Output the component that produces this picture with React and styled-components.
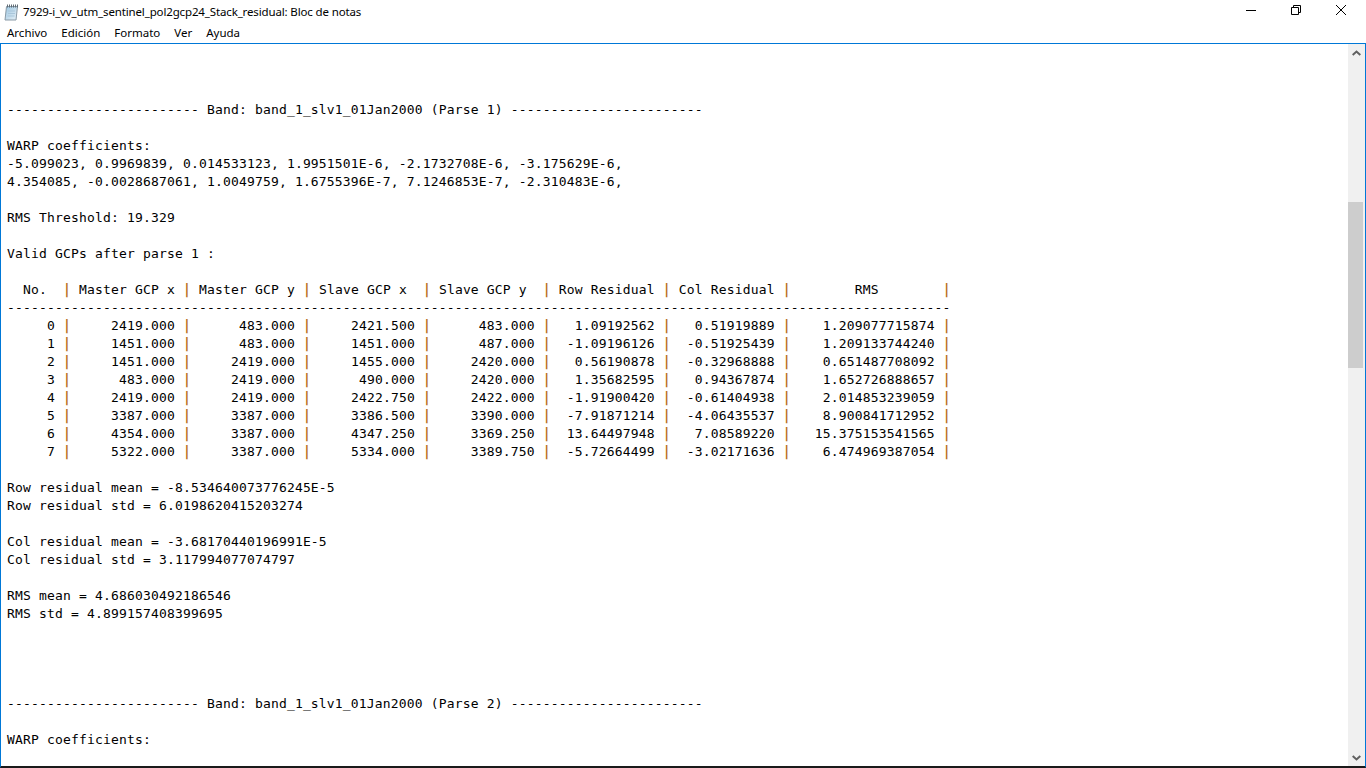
import React from 'react';
import styled, { createGlobalStyle } from 'styled-components';

const GlobalStyle = createGlobalStyle`
	html, body {
		margin: 0;
		padding: 0;
		height: 100%;
		overflow: hidden;
		background: #fff;
	}
`;

const Window = styled.div`
	display: flex;
	flex-direction: column;
	width: 1366px;
	height: 768px;
	background: #fff;
	font-family: 'Noto Sans', 'Open Sans', sans-serif;
	font-size: 11.5px;
	color: #000;
`;

const TitleBar = styled.div`
	display: flex;
	align-items: center;
	height: 22px;
	padding-right: 3px;
	flex-shrink: 0;
`;

const AppIcon = styled.svg`
	width: 16px;
	height: 17px;
	margin: 2px 4px 0 3px;
	flex-shrink: 0;
`;

const Title = styled.div`
	flex: 1;
	letter-spacing: -0.14px;
	white-space: nowrap;
`;

const Caption = styled.div`
	display: flex;
	align-items: center;
	justify-content: center;
	align-self: flex-start;
	width: 45px;
	height: 20px;
`;

const MenuBar = styled.div`
	display: flex;
	align-items: center;
	height: 21px;
	padding-left: 7px;
	gap: 14px;
	flex-shrink: 0;
`;

const Frame = styled.div`
	display: flex;
	flex: 1;
	min-height: 0;
	border-top: 1px solid #0078d7;
	border-left: 1px solid #0078d7;
	border-right: 1px solid #0078d7;
	border-bottom: 2px solid #1a1a1a;
`;

const Editor = styled.pre`
	flex: 1;
	margin: 0;
	padding: 57px 0 0 6px;
	overflow: hidden;
	font-family: 'DejaVu Sans Mono', monospace;
	font-size: 13px;
	letter-spacing: 0.17px;
	line-height: 18px;
	color: #000;
`;

/* the pipe in the reference font is taller than in DejaVu */
const Pipe = styled.span`
	display: inline-block;
	color: #b96f20;
	font-weight: bold;
	transform: scaleY(1.08);
`;

const Scrollbar = styled.div`
	display: flex;
	flex-direction: column;
	width: 17px;
	background: #f0f0f0;
	flex-shrink: 0;
`;

const ScrollButton = styled.div`
	display: flex;
	align-items: center;
	justify-content: center;
	height: 17px;
`;

const TrackSpace = styled.div`
	height: ${(props) => props.size}px;
	flex: ${(props) => (props.size ? 'none' : 1)};
`;

const Thumb = styled.div`
	width: 15px;
	height: 166px;
	background: #cdcdcd;
`;

const rule = '-'.repeat(24);
const band = (n) => `${rule} Band: band_1_slv1_01Jan2000 (Parse ${n}) ${rule}`;

const head = ['  No.  ', ' Master GCP x ', ' Master GCP y ', ' Slave GCP x  ', ' Slave GCP y  ', ' Row Residual ', ' Col Residual ', '        RMS        '];
const widths = [7, 14, 14, 14, 14, 14, 14, 19];

const rows = [
	['0', '2419.000', '483.000', '2421.500', '483.000', '1.09192562', '0.51919889', '1.209077715874'],
	['1', '1451.000', '483.000', '1451.000', '487.000', '-1.09196126', '-0.51925439', '1.209133744240'],
	['2', '1451.000', '2419.000', '1455.000', '2420.000', '0.56190878', '-0.32968888', '0.651487708092'],
	['3', '483.000', '2419.000', '490.000', '2420.000', '1.35682595', '0.94367874', '1.652726888657'],
	['4', '2419.000', '2419.000', '2422.750', '2422.000', '-1.91900420', '-0.61404938', '2.014853239059'],
	['5', '3387.000', '3387.000', '3386.500', '3390.000', '-7.91871214', '-4.06435537', '8.900841712952'],
	['6', '4354.000', '3387.000', '4347.250', '3369.250', '13.64497948', '7.08589220', '15.375153541565'],
	['7', '5322.000', '3387.000', '5334.000', '3389.750', '-5.72664499', '-3.02171636', '6.474969387054'],
];

function TableRow({ cells }) {
	return (
		<>
			{cells.map((cell, i) => (
				<React.Fragment key={i}>
					{cell}
					<Pipe>|</Pipe>
				</React.Fragment>
			))}
			{'\n'}
		</>
	);
}

function App() {
	return (
		<>
			<GlobalStyle />
			<Window>
				<TitleBar>
					<AppIcon viewBox="0 0 16 17">
						<defs>
							<linearGradient id="pad" x1="0" y1="0" x2="1" y2="1">
								<stop offset="0" stopColor="#9cc6e2" />
								<stop offset="1" stopColor="#e6f0f6" />
							</linearGradient>
						</defs>
						<path d="M3.5 2.500h11l-1.500 13.500h-11z" fill="url(#pad)" stroke="#8a9aa6" />
						<path d="M4.500 .5v3M6.500 .5v3M8.500 .5v3M10.500 .5v3M12.500 .5v3M14.500 .5v3" stroke="#5f6b74" />
						<path d="M5 7h7M5 9.500h7M4.500 12h7" stroke="#a9c6da" />
					</AppIcon>
					<Title>7929-i_vv_utm_sentinel_pol2gcp24_Stack_residual: Bloc de notas</Title>
					<Caption>
						<svg width="10" height="10" viewBox="0 0 10 10">
							<path d="M0 5.500h10" stroke="#000" />
						</svg>
					</Caption>
					<Caption>
						<svg width="10" height="10" viewBox="0 0 10 10" fill="none">
							<path d="M.5 2.500h7v7h-7zM2.500 2.500v-2h7v7h-2" stroke="#000" />
						</svg>
					</Caption>
					<Caption>
						<svg width="10" height="10" viewBox="0 0 10 10">
							<path d="M0 0l10 10M10 0L0 10" stroke="#000" />
						</svg>
					</Caption>
				</TitleBar>
				<MenuBar>
					<span>Archivo</span>
					<span>Edición</span>
					<span>Formato</span>
					<span>Ver</span>
					<span>Ayuda</span>
				</MenuBar>
				<Frame>
					<Editor>
						{band(1)}
						{'\n\nWARP coefficients:\n'}
						{'-5.099023, 0.9969839, 0.014533123, 1.9951501E-6, -2.1732708E-6, -3.175629E-6,\n'}
						{'4.354085, -0.0028687061, 1.0049759, 1.6755396E-7, 7.1246853E-7, -2.310483E-6,\n'}
						{'\nRMS Threshold: 19.329\n\nValid GCPs after parse 1 :\n\n'}
						<TableRow cells={head} />
						{'-'.repeat(118) + '\n'}
						{rows.map((row) => (
							<TableRow
								key={row[0]}
								cells={row.map((v, i) => (v + ' ').padStart(widths[i]))}
							/>
						))}
						{'\nRow residual mean = -8.534640073776245E-5\n'}
						{'Row residual std = 6.0198620415203274\n\n'}
						{'Col residual mean = -3.68170440196991E-5\n'}
						{'Col residual std = 3.117994077074797\n\n'}
						{'RMS mean = 4.686030492186546\n'}
						{'RMS std = 4.899157408399695\n\n\n\n\n'}
						{band(2)}
						{'\n\nWARP coefficients:\n'}
					</Editor>
					<Scrollbar>
						<ScrollButton>
							<svg width="9" height="6" viewBox="0 0 9 6">
								<path d="M.7 5L4.500 1.500 8.300 5" fill="none" stroke="#606060" strokeWidth="2" />
							</svg>
						</ScrollButton>
						<TrackSpace size={141} />
						<Thumb />
						<TrackSpace />
						<ScrollButton>
							<svg width="9" height="6" viewBox="0 0 9 6">
								<path d="M.7 1L4.500 4.500 8.300 1" fill="none" stroke="#606060" strokeWidth="2" />
							</svg>
						</ScrollButton>
					</Scrollbar>
				</Frame>
			</Window>
		</>
	);
}

export default App;
